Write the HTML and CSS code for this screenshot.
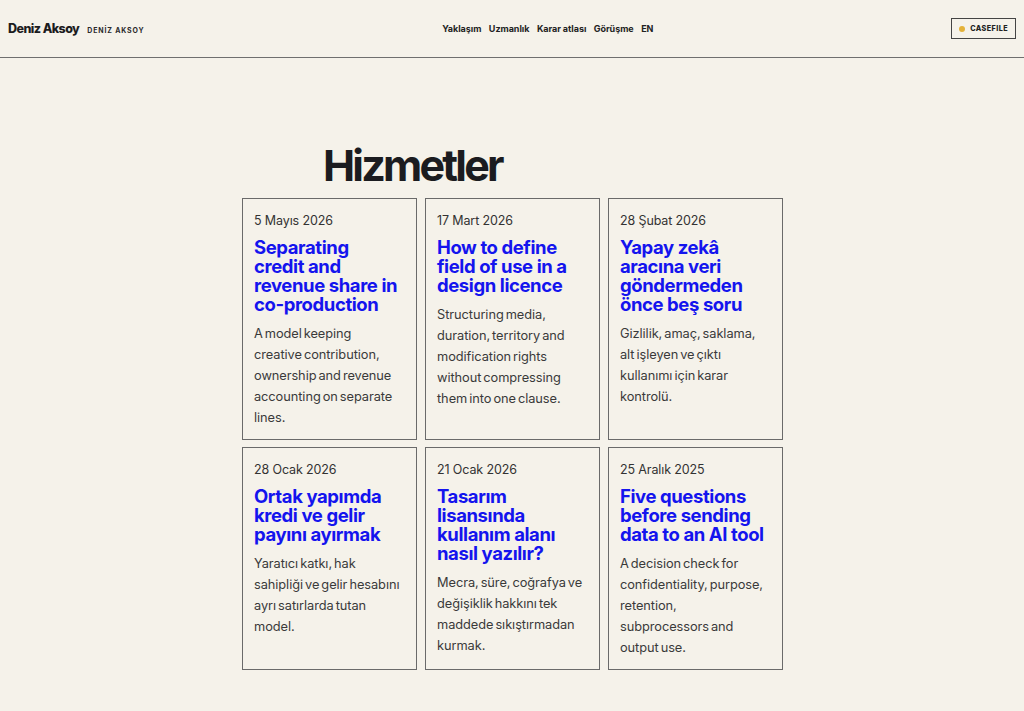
FILE: index.html
```html
<!DOCTYPE html>
<html lang="tr">
<head>
<meta charset="utf-8">
<title>Hizmetler — Deniz Aksoy</title>
<link rel="stylesheet" href="styles.css">
</head>
<body>
<header class="site-header">
  <div class="brand">
    <span class="brand-name">Deniz Aksoy</span>
    <span class="brand-tag">DENİZ AKSOY</span>
  </div>
  <nav class="nav">
    <a href="#">Yaklaşım</a>
    <a href="#">Uzmanlık</a>
    <a href="#">Karar atlası</a>
    <a href="#">Görüşme</a>
    <a href="#">EN</a>
  </nav>
  <a class="casefile" href="#"><span class="dot"></span>CASEFILE</a>
</header>
<main class="main">
  <h1 class="page-title">Hizmetler</h1>
  <div class="grid">
    <article class="card">
      <div class="date">5 Mayıs 2026</div>
      <h2 class="card-title">Separating credit and revenue share in co-production</h2>
      <p class="card-text">A model keeping creative contribution, ownership and revenue accounting on separate lines.</p>
    </article>
    <article class="card">
      <div class="date">17 Mart 2026</div>
      <h2 class="card-title">How to define field of use in a design licence</h2>
      <p class="card-text">Structuring media, duration, territory and modification rights without compressing them into one clause.</p>
    </article>
    <article class="card">
      <div class="date">28 Şubat 2026</div>
      <h2 class="card-title">Yapay zekâ aracına veri göndermeden önce beş soru</h2>
      <p class="card-text">Gizlilik, amaç, saklama, alt işleyen ve çıktı kullanımı için karar kontrolü.</p>
    </article>
    <article class="card">
      <div class="date">28 Ocak 2026</div>
      <h2 class="card-title">Ortak yapımda kredi ve gelir payını ayırmak</h2>
      <p class="card-text">Yaratıcı katkı, hak sahipliği ve gelir hesabını ayrı satırlarda tutan model.</p>
    </article>
    <article class="card">
      <div class="date">21 Ocak 2026</div>
      <h2 class="card-title">Tasarım lisansında kullanım alanı nasıl yazılır?</h2>
      <p class="card-text">Mecra, süre, coğrafya ve değişiklik hakkını tek maddede sıkıştırmadan kurmak.</p>
    </article>
    <article class="card">
      <div class="date">25 Aralık 2025</div>
      <h2 class="card-title">Five questions before sending data to an AI tool</h2>
      <p class="card-text">A decision check for confidentiality, purpose, retention, subprocessors and output use.</p>
    </article>
  </div>
</main>
</body>
</html>
```
FILE: styles.css
```css
* { box-sizing: border-box; }
html, body { margin: 0; padding: 0; }
body {
  background: #f5f2ea;
  color: #1c1c1e;
  font-family: Inter, "Noto Sans", sans-serif;
}
a { color: inherit; text-decoration: none; }

.site-header {
  height: 58px;
  padding: 0 8px;
  display: flex;
  align-items: center;
  justify-content: space-between;
  border-bottom: 1px solid #6f6f6f;
}
.brand { display: flex; align-items: baseline; gap: 8px; }
.brand-name {
  font-size: 12.5px;
  font-weight: 800;
  letter-spacing: -0.045em;
}
.brand-tag {
  font-size: 7px;
  font-weight: 700;
  letter-spacing: 0.12em;
  color: #2a2a2a;
}
.nav { display: flex; gap: 7.5px; }
.nav a {
  font-size: 9px;
  font-weight: 700;
  letter-spacing: -0.005em;
  color: #222;
}
.casefile {
  display: flex;
  align-items: center;
  gap: 5px;
  height: 21px;
  padding: 0 7px 0 7px;
  border: 1px solid #444;
  font-size: 7.2px;
  font-weight: 800;
  letter-spacing: 0.06em;
  color: #222;
}
.dot {
  width: 6px;
  height: 6px;
  border-radius: 50%;
  background: #e4b23a;
}

.main {
  width: 540px;
  margin: 0 auto;
  padding: 83px 0 40px;
}
.page-title {
  margin: 0 0 9px 81px;
  font-size: 43px;
  line-height: 48px;
  font-weight: 700;
  letter-spacing: -0.065em;
  color: #1b1c20;
}
.grid {
  display: grid;
  grid-template-columns: repeat(3, 175px);
  column-gap: 8px;
  row-gap: 7px;
  justify-content: space-between;
}
.card {
  border: 1px solid #6a6a6a;
  padding: 12px 16px 11px 11px;
}
.date {
  font-size: 12.5px;
  line-height: 20px;
  color: #333;
  letter-spacing: -0.01em;
}
.card-title {
  margin: 7px 0 0;
  font-size: 18.5px;
  line-height: 19px;
  font-weight: 700;
  letter-spacing: -0.022em;
  color: #1414ee;
}
.card-text {
  margin: 9px 0 0;
  font-size: 12.8px;
  line-height: 21px;
  color: #3a3a3a;
  letter-spacing: -0.005em;
  word-spacing: -1.5px;
}
```
